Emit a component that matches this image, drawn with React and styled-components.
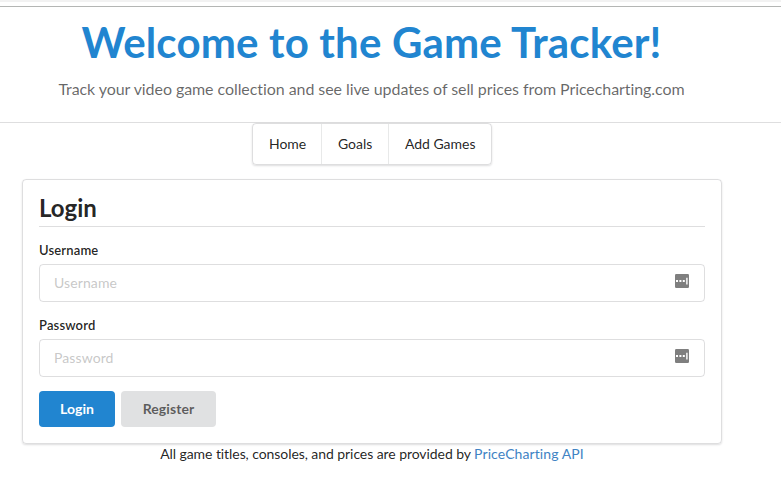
import React from "react";
import styled, { createGlobalStyle } from "styled-components";

const Global = createGlobalStyle`
  *, *::before, *::after { box-sizing: border-box; }
  body {
    margin: 0;
    background: #fff;
    color: rgba(0, 0, 0, 0.87);
    font-family: Lato, "Liberation Sans", sans-serif;
    font-size: 14px;
    line-height: 20px;
    font-variant-ligatures: none;
    overflow: hidden;
  }
`;

const Page = styled.div`
  height: 488px;
  overflow: hidden;
  padding-top: 4px;
  border-top: 2px solid #f2f2f2;
`;

const Masthead = styled.header`
  height: 117px;
  border-top: 1px solid #b4b6b4;
  border-bottom: 1px solid #dededf;
  padding: 8px 38px 0 0;
  text-align: center;
`;

const Title = styled.h1`
  margin: 0;
  font-size: 42px;
  line-height: 54px;
  font-weight: 700;
  letter-spacing: 0.17px;
  color: #2185d0;
`;

const Tagline = styled.p`
  margin: 10px 0 0;
  font-size: 16px;
  line-height: 20px;
  letter-spacing: -0.07px;
  color: rgba(0, 0, 0, 0.6);
`;

const Content = styled.main`
  width: 700px;
  margin-left: 22px;
  display: flex;
  flex-direction: column;
  align-items: center;
`;

const Menu = styled.nav`
  display: flex;
  width: 240px;
  height: 42px;
  border: 1px solid rgba(34, 36, 38, 0.15);
  border-radius: 4px;
  box-shadow: 0 1px 2px 0 rgba(34, 36, 38, 0.15);
`;

const MenuItem = styled.a`
  width: ${(p) => p.$width}px;
  padding: 10px 0 0 16px;
  line-height: 20px;
  letter-spacing: -0.03px;
  white-space: nowrap;
  & + & { border-left: 1px solid rgba(34, 36, 38, 0.1); }
`;

const Segment = styled.section`
  width: 100%;
  height: 265px;
  margin-top: 14px;
  padding: 13px 16px;
  border: 1px solid rgba(34, 36, 38, 0.15);
  border-radius: 4px;
  box-shadow: 0 1px 2px 0 rgba(34, 36, 38, 0.15);
`;

const Heading = styled.h2`
  height: 34px;
  margin: 0 0 14px;
  border-bottom: 1px solid rgba(34, 36, 38, 0.15);
  font-size: 24px;
  line-height: 30px;
  font-weight: 700;
`;

const Field = styled.div`
  margin-bottom: 14px;
`;

const Label = styled.label`
  display: block;
  margin-bottom: 4px;
  font-size: 13px;
  line-height: 19px;
  font-weight: 600;
  letter-spacing: 0.15px;
`;

const InputBox = styled.div`
  display: flex;
  align-items: center;
  height: 38px;
  padding: 0 15px 0 14px;
  border: 1px solid rgba(34, 36, 38, 0.15);
  border-radius: 4px;
`;

const Input = styled.input`
  flex: 1;
  min-width: 0;
  padding: 0;
  border: 0;
  outline: 0;
  background: transparent;
  font: inherit;
  letter-spacing: 0.1px;
  &::placeholder { color: rgba(191, 191, 191, 0.87); opacity: 1; }
`;

const KeyIcon = styled.svg`
  display: block;
  margin-bottom: 4px;
`;

const Actions = styled.div`
  display: flex;
  gap: 6px;
`;

const Button = styled.button`
  width: ${(p) => (p.$primary ? "76px" : "95px")};
  height: 36px;
  padding: 0;
  border: 0;
  border-radius: 4px;
  font: 700 14px/14px Lato, sans-serif;
  letter-spacing: 0.08px;
  color: ${(p) => (p.$primary ? "#fff" : "rgba(0, 0, 0, 0.6)")};
  background: ${(p) => (p.$primary ? "#2185d0" : "#e0e1e2")};
`;

const Footer = styled.footer`
  line-height: 20px;
  letter-spacing: -0.07px;
`;

const Link = styled.a`
  color: #4183c4;
  letter-spacing: 0.09px;
`;

function CredentialField({ label, type }) {
  return (
    <Field>
      <Label>{label}</Label>
      <InputBox>
        <Input type={type} placeholder={label} />
        <KeyIcon width="14" height="14" viewBox="0 0 14 14">
          <rect width="14" height="14" rx="1.2" fill="#7f7f7f" />
          <path d="M1 6h2v2H1zM4.4 6h2v2h-2zM7.8 6h2v2h-2zM11.2 3.7h1.4v6.8h-1.4z" fill="#fff" />
        </KeyIcon>
      </InputBox>
    </Field>
  );
}

export default function App() {
  return (
    <Page>
      <Global />
      <Masthead>
        <Title>Welcome to the Game Tracker!</Title>
        <Tagline>
          Track your video game collection and see live updates of sell prices from Pricecharting.com
        </Tagline>
      </Masthead>
      <Content>
        <Menu>
          <MenuItem $width={68}>Home</MenuItem>
          <MenuItem $width={67}>Goals</MenuItem>
          <MenuItem $width={103}>Add Games</MenuItem>
        </Menu>
        <Segment>
          <Heading>Login</Heading>
          <CredentialField label="Username" type="text" />
          <CredentialField label="Password" type="password" />
          <Actions>
            <Button $primary>Login</Button>
            <Button>Register</Button>
          </Actions>
        </Segment>
        <Footer>
          All game titles, consoles, and prices are provided by <Link>PriceCharting API</Link>
        </Footer>
      </Content>
    </Page>
  );
}
